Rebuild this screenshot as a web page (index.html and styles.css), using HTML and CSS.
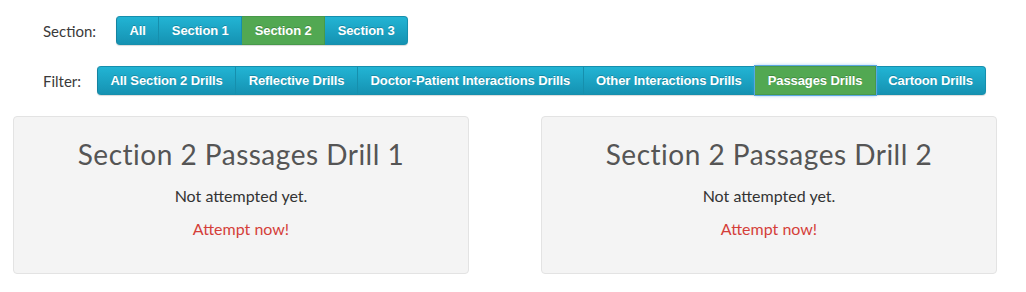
FILE: index.html
```html
<!DOCTYPE html>
<html>
<head>
<meta charset="utf-8">
<link rel="stylesheet" href="styles.css">
</head>
<body>
<div class="page">
  <div class="row sec-row">
    <span class="label">Section:</span>
    <div class="group">
      <span class="btn">All</span>
      <span class="btn">Section 1</span>
      <span class="btn active">Section 2</span>
      <span class="btn">Section 3</span>
    </div>
  </div>
  <div class="row filter-row">
    <span class="label">Filter:</span>
    <div class="group">
      <span class="btn">All Section 2 Drills</span>
      <span class="btn">Reflective Drills</span>
      <span class="btn">Doctor-Patient Interactions Drills</span>
      <span class="btn">Other Interactions Drills</span>
      <span class="btn active focus">Passages Drills</span>
      <span class="btn">Cartoon Drills</span>
    </div>
  </div>
  <div class="cards">
    <div class="card">
      <h2>Section 2 Passages Drill 1</h2>
      <p class="status">Not attempted yet.</p>
      <p class="attempt">Attempt now!</p>
    </div>
    <div class="card">
      <h2>Section 2 Passages Drill 2</h2>
      <p class="status">Not attempted yet.</p>
      <p class="attempt">Attempt now!</p>
    </div>
  </div>
</div>
</body>
</html>
```

FILE: styles.css
```css
html, body {
  margin: 0;
  padding: 0;
  background: #fff;
}
body {
  font-family: Lato, "Open Sans", sans-serif;
  color: #333;
}
.page {
  padding: 16px 29px 0 13px;
}
.row {
  display: flex;
  align-items: center;
}
.label {
  flex-shrink: 0;
  font-size: 15px;
  font-weight: 400;
  color: #3a3a3a;
  padding-left: 30px;
}
.sec-row .label {
  width: 73px;
}
.filter-row {
  margin-top: 21px;
}
.filter-row .label {
  width: 54px;
}
.group {
  display: flex;
  flex-shrink: 0;
  border-radius: 4px;
  box-shadow: 0 1px 1px rgba(0,0,0,0.15);
}
.btn {
  display: block;
  flex-shrink: 0;
  white-space: nowrap;
  height: 27px;
  line-height: 27px;
  padding: 0 12.5px;
  font-family: "Liberation Sans", Arial, sans-serif;
  font-weight: bold;
  font-size: 13px;
  letter-spacing: -0.1px;
  color: #fff;
  text-shadow: 0 -1px 0 rgba(0,0,0,0.2);
  background: linear-gradient(#22b4d4, #1592b2);
  border: 1px solid #168fad;
  border-left-color: #1583a0;
  border-left-width: 0;
}
.btn:first-child {
  border-left-width: 1px;
  border-radius: 4px 0 0 4px;
}
.btn:last-child {
  border-radius: 0 4px 4px 0;
}
.btn.active {
  background: #52a852;
  border-color: #47994a;
}
.btn.focus {
  box-shadow: 0 0 0 1px #5aa7e0, 0 0 4px rgba(80,160,230,0.8);
  position: relative;
}
.cards {
  display: flex;
  justify-content: space-between;
  margin-top: 21px;
}
.card {
  width: 454px;
  height: 156px;
  background: #f4f4f4;
  border: 1px solid #e3e3e3;
  border-radius: 4px;
  text-align: center;
  box-sizing: content-box;
}
.card h2 {
  margin: 21px 0 0;
  font-size: 28px;
  letter-spacing: 0.5px;
  font-weight: 400;
  color: #555;
  line-height: 32px;
}
.card .status {
  margin: 16px 0 0;
  font-size: 16px;
  font-weight: 400;
  color: #333;
  line-height: 20px;
}
.card .attempt {
  margin: 13px 0 0;
  font-size: 16px;
  font-weight: 400;
  color: #d43f3a;
  line-height: 20px;
}
```
